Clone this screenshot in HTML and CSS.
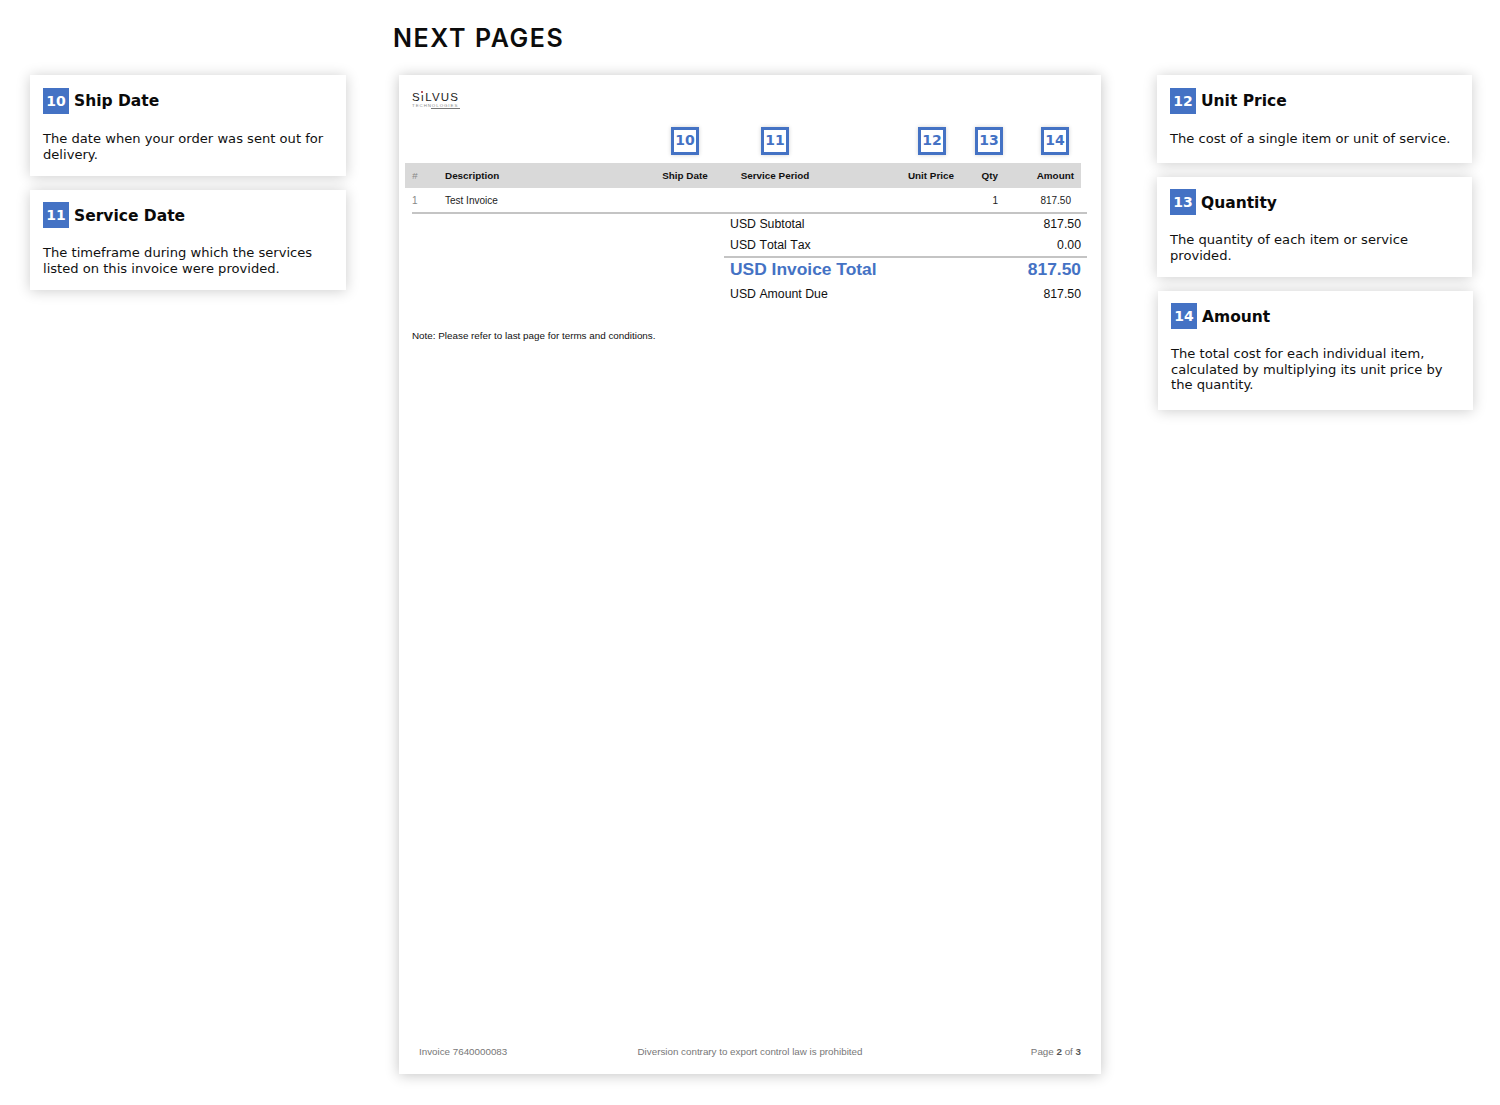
FILE: index.html
```html
<!DOCTYPE html>
<html lang="en">
<head>
<meta charset="utf-8">
<title>Next Pages</title>
<link rel="stylesheet" href="styles.css">
</head>
<body>
<h1 class="title">NEXT PAGES</h1>
<main class="layout">
  <aside class="col">
    <section class="card card-first">
      <h2 class="card-head"><span class="num">10</span><span class="label">Ship Date</span></h2>
      <p class="card-text">The date when your order was sent out for delivery.</p>
    </section>
    <section class="card">
      <h2 class="card-head"><span class="num">11</span><span class="label">Service Date</span></h2>
      <p class="card-text">The timeframe during which the services listed on this invoice were provided.</p>
    </section>
  </aside>

  <article class="page">
    <div class="logo">
      <div class="logo-main">S<span class="logo-i">ı</span>LVUS</div>
      <div class="logo-sub">TECHNOLOGIES</div>
      <div class="logo-rule"></div>
    </div>
    <div class="markers">
      <span class="marker m10">10</span>
      <span class="marker m11">11</span>
      <span class="marker m12">12</span>
      <span class="marker m13">13</span>
      <span class="marker m14">14</span>
    </div>
    <div class="grid thead">
      <span class="hash">#</span>
      <span>Description</span>
      <span class="center">Ship Date</span>
      <span class="center">Service Period</span>
      <span class="right price">Unit Price</span>
      <span class="right">Qty</span>
      <span class="right">Amount</span>
    </div>
    <div class="grid trow">
      <span class="hash">1</span>
      <span>Test Invoice</span>
      <span></span>
      <span></span>
      <span></span>
      <span class="right">1</span>
      <span class="right rowamt">817.50</span>
    </div>
    <div class="totals">
      <div class="trule"></div>
      <div class="tline"><span>USD Subtotal</span><span>817.50</span></div>
      <div class="tline"><span>USD Total Tax</span><span>0.00</span></div>
      <div class="tline grand"><span>USD Invoice Total</span><span>817.50</span></div>
      <div class="tline"><span>USD Amount Due</span><span>817.50</span></div>
    </div>
    <p class="note">Note: Please refer to last page for terms and conditions.</p>
    <footer class="foot">
      <span>Invoice 7640000083</span>
      <span>Diversion contrary to export control law is prohibited</span>
      <span>Page <b>2</b> of <b>3</b></span>
    </footer>
  </article>

  <aside class="col col-right">
    <section class="card card-first card-short">
      <h2 class="card-head"><span class="num">12</span><span class="label">Unit Price</span></h2>
      <p class="card-text">The cost of a single item or unit of service.</p>
    </section>
    <section class="card">
      <h2 class="card-head"><span class="num">13</span><span class="label">Quantity</span></h2>
      <p class="card-text">The quantity of each item or service provided.</p>
    </section>
    <section class="card card-tall">
      <h2 class="card-head"><span class="num">14</span><span class="label">Amount</span></h2>
      <p class="card-text">The total cost for each individual item, calculated by multiplying its unit price by the quantity.</p>
    </section>
  </aside>
</main>
</body>
</html>
```

FILE: styles.css
```css
* { box-sizing: border-box; }
html, body { margin: 0; padding: 0; background: #fff; }
body {
  width: 1500px;
  height: 1105px;
  overflow: hidden;
  color: #000;
  font-family: "Liberation Sans", Arial, sans-serif;
}
.title {
  margin: 0;
  height: 75px;
  padding: 21px 0 0 393px;
  font-family: Inter, sans-serif;
  font-size: 25px;
  line-height: 34px;
  font-weight: 600;
  letter-spacing: 1.6px;
  color: #0c0c0c;
}
.layout {
  display: grid;
  grid-template-columns: 316px 702px 315px;
  column-gap: 53px;
  padding-left: 30px;
  align-items: start;
}
.col { display: flex; flex-direction: column; gap: 14px; }
.col-right { margin-left: 3px; margin-right: -3px; }
.card {
  background: #fff;
  box-shadow: 0 1px 13px rgba(0, 0, 0, 0.2);
  padding: 12px 13px 14px;
  font-family: "DejaVu Sans", Verdana, sans-serif;
}
.card .label { padding-top: 2px; }
.card-first { padding-top: 13px; }
.card-first .label { padding-top: 0; }
.card-short { padding-bottom: 16.5px; }
.card-tall { padding-bottom: 17.5px; margin-left: 1px; margin-right: -1px; }
.card-head {
  display: flex;
  align-items: center;
  gap: 5px;
  height: 26px;
  margin: 0 0 17px;
  font-size: 15.5px;
  line-height: 26px;
  font-weight: 700;
  color: #0a0a0a;
}
.num {
  width: 26px;
  height: 26px;
  display: flex;
  align-items: center;
  justify-content: center;
  background: #4472c4;
  color: #fff;
  font-size: 14px;
  font-weight: 700;
}
.card-text {
  margin: 0;
  font-size: 13.1px;
  line-height: 15.5px;
  color: #111;
}

.page {
  height: 999px;
  background: #fff;
  box-shadow: 0 1px 13px rgba(0, 0, 0, 0.24);
  padding: 16px 14px 16px 6px;
  display: flex;
  flex-direction: column;
}
.logo { margin-left: 7px; width: 49px; height: 36px; }
.logo-main {
  font-size: 11.5px;
  line-height: 12px;
  letter-spacing: 1.15px;
  color: #222;
  white-space: nowrap;
}
.logo-i { position: relative; color: #222; }
.logo-i::before {
  content: "";
  position: absolute;
  left: 0.5px;
  top: 0;
  width: 2px;
  height: 2px;
  border-radius: 50%;
  background: #a3202e;
}
.logo-sub {
  font-size: 4.4px;
  line-height: 5px;
  letter-spacing: 0.95px;
  color: #888;
  white-space: nowrap;
}
.logo-rule { height: 1px; margin: 0 0 0 19px; width: 29px; background: #777; }

.markers { display: flex; height: 36px; }
.marker {
  width: 28px;
  height: 28px;
  display: flex;
  align-items: center;
  justify-content: center;
  padding-bottom: 2px;
  border: 3px solid #4472c4;
  color: #4472c4;
  background: #fff;
  font-family: "DejaVu Sans", Verdana, sans-serif;
  font-size: 14px;
  font-weight: 700;
  box-shadow: 0 0 4px rgba(0, 0, 0, 0.18);
}
.m10 { margin-left: 266px; }
.m11 { margin-left: 62px; }
.m12 { margin-left: 129px; }
.m13 { margin-left: 29px; }
.m14 { margin-left: 38px; }

.grid {
  display: grid;
  grid-template-columns: 40px 205px 70px 110px 125px 43px 83px;
  width: 676px;
  align-items: center;
  font-size: 9.9px;
}
.thead {
  height: 25px;
  background: #d9d9d9;
  font-weight: 700;
  color: #111;
}
.trow { height: 24px; color: #222; font-size: 10px; }
.hash { padding-left: 7px; color: #888; font-weight: 400; font-style: normal; }
.thead .hash { font-style: italic; }
.center { text-align: center; }
.right { text-align: right; }
.price { padding-right: 1px; }
.thead .right:last-child { padding-right: 7px; }
.rowamt { padding-right: 10px; }

.totals { margin-left: 7px; width: 675px; }
.trule { height: 2px; background: #c4c4c4; }
.tline {
  display: flex;
  justify-content: space-between;
  height: 21px;
  margin-left: 312px;
  padding: 0 6px;
  font-size: 12.3px;
  font-kerning: none;
  line-height: 21px;
  color: #111;
}
.grand {
  height: 28px;
  border-top: 2px solid #c4c4c4;
  font-size: 17.4px;
  font-kerning: auto;
  font-weight: 700;
  line-height: 23px;
  color: #4472c4;
}
.note {
  margin: 25px 0 0 7px;
  font-size: 9.85px;
  line-height: 12px;
  color: #111;
}
.foot {
  margin-top: auto;
  margin-left: 14px;
  width: 662px;
  display: grid;
  grid-template-columns: 1fr auto 1fr;
  font-size: 9.8px;
  line-height: 12px;
  color: #777;
}
.foot span:last-child { text-align: right; }
.foot b { color: #555; }
```
